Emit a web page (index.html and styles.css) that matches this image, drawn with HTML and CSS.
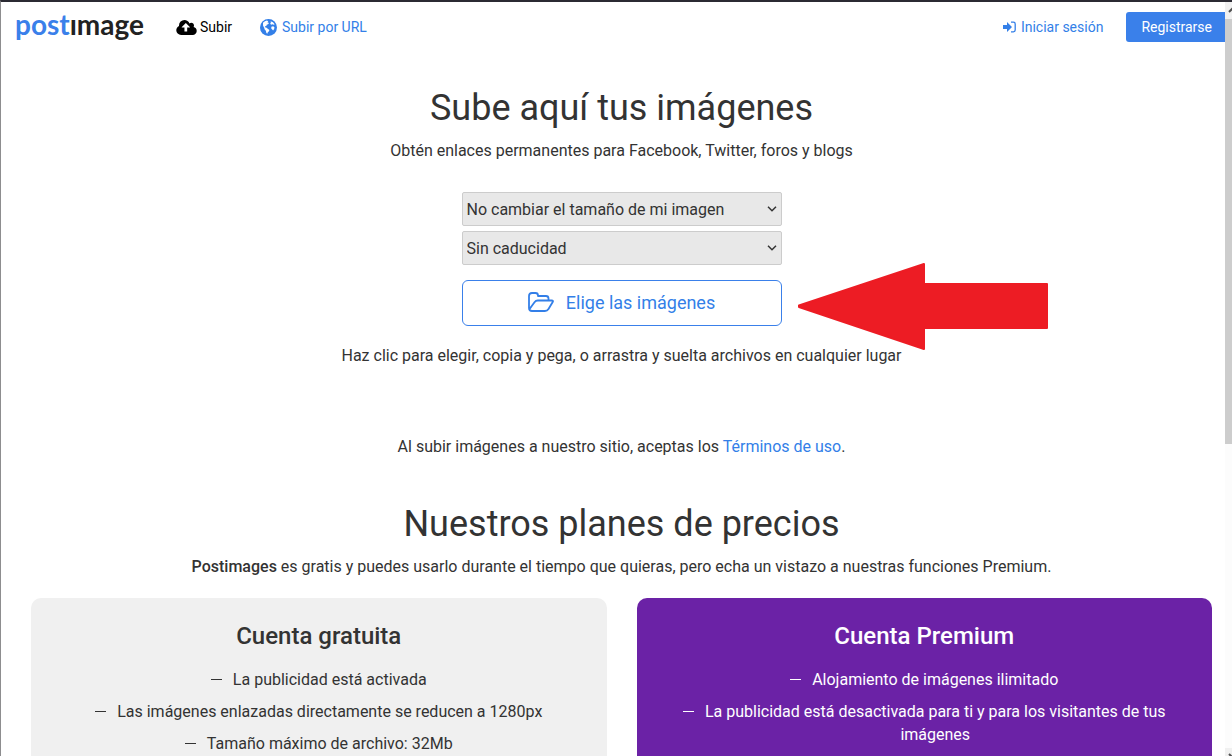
FILE: index.html
```html
<!DOCTYPE html>
<html lang="es">
<head>
<meta charset="utf-8">
<meta name="viewport" content="width=device-width, initial-scale=1">
<title>Postimages</title>
<link rel="stylesheet" href="styles.css">
</head>
<body>
<div class="window">
  <div class="page">
    <header class="navbar">
      <a class="logo" href="#"><span class="logo-post">post</span><span class="logo-image">ımage</span></a>
      <nav class="nav">
        <a class="nav-link nav-active" href="#">
          <svg class="icon-cloud" viewBox="0 0 1920 1408" aria-hidden="true"><path fill="currentColor" d="M1280 672q0-14-9-23L919 297q-9-9-23-9t-23 9L522 648q-10 12-10 24 0 14 9 23t23 9h224v352q0 13 10 22t22 10h192q13 0 23-10t9-22V704h224q13 0 23-10t9-22zm640 352q0 159-113 272t-271 112H448q-185 0-317-131T0 960q0-130 70-240t188-165q-2-30-2-43 0-212 150-362T768 0q156 0 286 87t188 231q71-62 166-62 106 0 181 75t75 181q0 76-41 138 130 31 214 136t83 238z"/></svg><span>Subir</span>
        </a>
        <a class="nav-link nav-url" href="#">
          <svg class="icon-globe" viewBox="0 0 16 16" aria-hidden="true"><circle cx="8" cy="8" r="8" fill="currentColor"/><path fill="#fff" d="M2.800 3.600 4.600 2 6.500 1.300 7.800 2 7 3.100 8.500 3.700 7.600 4.900 6.300 5.300 6 6.500 4.800 6.800 4.600 7.800 5.800 8.100 7.600 9.300 8.900 10.300 8.200 11.800 7.200 12.600 6.900 13.800 6 13.200 5.500 11 4.400 9.800 3.900 8.200 2.900 6.400zM10 2 12.200 3 13.800 5 13 5.400 11.600 4.900 10.500 5.400 9.600 4.500 10.200 3.400zM10.700 7.200 12.400 6.800 13.600 7.700 13.300 9.500 12.300 10.800 11.500 9.900 10.600 9z"/></svg><span>Subir por URL</span>
        </a>
      </nav>
      <div class="account">
        <a class="nav-link login" href="#">
          <svg class="icon-login" viewBox="0 0 13 12" aria-hidden="true"><path fill="currentColor" d="M0 4h4V1l5 5-5 5V8H0z"/><path fill="none" stroke="currentColor" stroke-width="1.3" d="M8 1.2h2.4q1.8 0 1.8 1.8v6q0 1.8-1.8 1.8H8"/></svg><span>Iniciar sesión</span>
        </a>
        <a class="register" href="#">Registrarse</a>
      </div>
    </header>

    <main class="content">
      <section class="upload">
        <h1 class="title">Sube aquí tus imágenes</h1>
        <p class="lead">Obtén enlaces permanentes para Facebook, Twitter, foros y blogs</p>
        <form class="form">
          <div class="field">
            <select class="select" aria-label="Tamaño de imagen"><option>No cambiar el tamaño de mi imagen</option></select>
            <svg class="chevron" viewBox="0 0 10 6" aria-hidden="true"><path d="M1 .8l4 4 4-4"/></svg>
          </div>
          <div class="field">
            <select class="select" aria-label="Caducidad"><option>Sin caducidad</option></select>
            <svg class="chevron" viewBox="0 0 10 6" aria-hidden="true"><path d="M1 .8l4 4 4-4"/></svg>
          </div>
          <button class="choose" type="button">
            <svg class="icon-folder" viewBox="0 0 26 20" aria-hidden="true"><path d="M1 16V4q0-3 3-3h3.500q2.500 0 2.500 2.500V4h8q2.500 0 2.500 2.500V8.500M1.200 17.500 6.500 10.200Q7.700 8.500 9.800 8.500H23.800q1.800 0 .9 1.500L20.500 17q-1.200 2-3.500 2H4Q1 19 1 16"/></svg><span>Elige las imágenes</span>
          </button>
          <svg class="arrow" viewBox="0 0 252 90" aria-hidden="true"><path d="M2 43.500 127 2V22H250V66H127V87L2 45z"/></svg>
        </form>
        <p class="hint">Haz clic para elegir, copia y pega, o arrastra y suelta archivos en cualquier lugar</p>
        <p class="terms">Al subir imágenes a nuestro sitio, aceptas los <a class="link" href="#">Términos de uso</a>.</p>
      </section>

      <section class="pricing">
        <h2 class="title">Nuestros planes de precios</h2>
        <p class="lead"><strong class="brand">Postimages</strong> es gratis y puedes usarlo durante el tiempo que quieras, pero echa un vistazo a nuestras funciones Premium.</p>
        <div class="plans">
          <article class="plan plan-free">
            <h3 class="plan-title">Cuenta gratuita</h3>
            <ul class="features">
              <li class="feature"><span>La publicidad está activada</span></li>
              <li class="feature"><span>Las imágenes enlazadas directamente se reducen a 1280px</span></li>
              <li class="feature"><span>Tamaño máximo de archivo: 32Mb</span></li>
            </ul>
          </article>
          <article class="plan plan-premium">
            <h3 class="plan-title">Cuenta Premium</h3>
            <ul class="features">
              <li class="feature"><span>Alojamiento de imágenes ilimitado</span></li>
              <li class="feature"><span>La publicidad está desactivada para ti y para los visitantes de tus imágenes</span></li>
            </ul>
          </article>
        </div>
      </section>
    </main>
  </div>
  <div class="scrollbar" aria-hidden="true">
    <div class="scroll-button"><svg class="scroll-glyph" viewBox="0 0 7 16"><path d="M4 10l4-4"/></svg></div>
    <div class="scroll-thumb"></div>
    <div class="scroll-rest"></div>
    <div class="scroll-button scroll-down"><svg class="scroll-glyph" viewBox="0 0 7 16"><path d="M4 6l4 4"/></svg></div>
  </div>
</div>
</body>
</html>
```
FILE: styles.css
```css
* {
  box-sizing: border-box;
}

body {
  margin: 0;
  background: #fff;
  color: #333;
  font-family: Roboto, "Liberation Sans", sans-serif;
  font-size: 16px;
  line-height: 23px;
}

h1, h2, h3, p, ul {
  margin: 0;
  padding: 0;
}

a {
  color: #337fe8;
  text-decoration: none;
}

.window {
  display: grid;
  grid-template-columns: minmax(0, 1fr) 7px;
  height: 100vh;
  overflow: hidden;
  border-top: 2px solid #2b2a33;
  border-left: 1px solid #8d8d8f;
}

.page {
  min-width: 0;
  overflow: hidden;
}

.navbar {
  display: flex;
  align-items: center;
  height: 50px;
  padding-left: 14px;
  font-size: 14px;
}

.logo {
  display: flex;
  width: 132px;
  padding-bottom: 6px;
  font-family: Lato, sans-serif;
  font-size: 28px;
  font-weight: 700;
  line-height: 32px;
}

.logo-post {
  color: #3a80ea;
}

.logo-image {
  color: #222;
}

.nav {
  display: flex;
  gap: 28px;
  margin-left: 29px;
}

.nav-link {
  display: flex;
  align-items: center;
  gap: 3px;
}

.nav-active {
  color: #000;
}

.nav-url {
  gap: 5px;
}

.icon-cloud {
  width: 21px;
  height: 15px;
}

.icon-globe {
  width: 17px;
  height: 17px;
}

.icon-login {
  width: 13px;
  height: 12px;
}

.account {
  display: flex;
  align-items: center;
  gap: 23px;
  margin-left: auto;
}

.login {
  gap: 5px;
}

.register {
  padding: 4px 13px 3px 15px;
  border-radius: 3px 0 0 3px;
  background: #3a80ea;
  color: #fff;
}

.content {
  padding: 32px 13px 0 30px;
  text-align: center;
}

.title {
  font-size: 36px;
  font-weight: 400;
  line-height: 48px;
}

.lead {
  margin-top: 7px;
}

.form {
  position: relative;
  display: flex;
  flex-direction: column;
  gap: 5px;
  width: 320px;
  margin: 30px auto 0;
}

.field {
  display: grid;
  align-items: center;
}

.select,
.chevron {
  grid-area: 1 / 1;
}

.select {
  appearance: none;
  width: 100%;
  height: 34px;
  padding: 0 4px;
  border: 1px solid #ccc;
  border-radius: 2px;
  background: #e8e8e8;
  color: #333;
  font: inherit;
}

.chevron {
  justify-self: end;
  width: 10px;
  height: 6px;
  margin-right: 5px;
  fill: none;
  stroke: #333;
  stroke-width: 1.5;
  pointer-events: none;
}

.choose {
  display: flex;
  align-items: center;
  justify-content: center;
  gap: 12px;
  height: 46px;
  margin-top: 10px;
  padding: 0 0 2px;
  border: 1px solid #3a80ea;
  border-radius: 6px;
  background: #fff;
  color: #337fe8;
  font: inherit;
  font-size: 18px;
}

.icon-folder {
  width: 26px;
  height: 20px;
  fill: none;
  stroke: currentColor;
  stroke-width: 1.8;
  stroke-linejoin: round;
}

.arrow {
  position: absolute;
  top: 70px;
  left: 335px;
  width: 252px;
  height: 90px;
}

.arrow path {
  fill: #ed1c24;
  stroke: #ed1c24;
  stroke-width: 2;
  stroke-linejoin: round;
}

.hint {
  margin-top: 18px;
}

.terms {
  margin-top: 68px;
}

.pricing {
  margin-top: 42px;
}

.brand {
  font-weight: 500;
}

.plans {
  display: grid;
  grid-template-columns: 1fr 1fr;
  gap: 30px;
  margin-top: 20px;
}

.plan {
  min-height: 240px;
  padding: 22px 46px;
  border-radius: 10px;
}

.plan-free {
  background: #f0f0f0;
}

.plan-premium {
  background: #6b22a6;
  color: #fff;
}

.plan-title {
  font-size: 24px;
  font-weight: 500;
  line-height: 32px;
}

.features {
  display: flex;
  flex-direction: column;
  gap: 9px;
  margin-top: 16px;
  list-style: none;
}

.feature {
  display: flex;
  justify-content: center;
  gap: 11px;
}

.feature::before {
  content: "";
  flex: none;
  width: 11px;
  height: 1px;
  margin-top: 11px;
  background: currentColor;
}

.scrollbar {
  display: flex;
  flex-direction: column;
  background: #fcfcfc;
}

.scroll-button {
  flex: none;
  height: 17px;
  background: #f0f0f0;
}

.scroll-down {
  height: 8px;
  overflow: hidden;
}

.scroll-glyph {
  display: block;
  width: 7px;
  height: 16px;
  fill: none;
  stroke: #505050;
  stroke-width: 2;
}

.scroll-thumb {
  flex: 425;
  background: #cdcdcd;
}

.scroll-rest {
  flex: 304;
}
```
